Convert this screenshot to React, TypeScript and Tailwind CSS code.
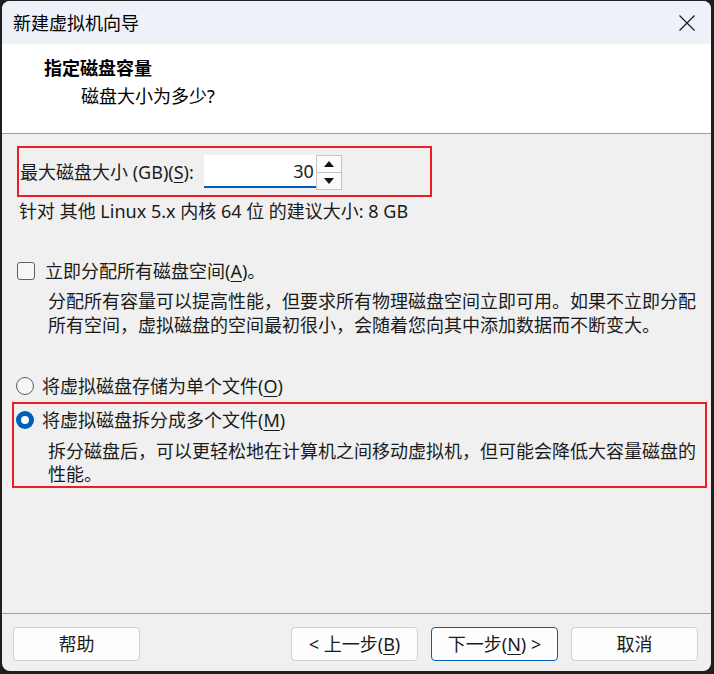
import React from "react";

const FONT = { fontFamily: '"Noto Sans", "Noto Sans CJK SC", sans-serif' };

function U({ children }: { children: React.ReactNode }) {
  return <span className="underline underline-offset-[3px] decoration-1">{children}</span>;
}

function Btn({ children, primary }: { children: React.ReactNode; primary?: boolean }) {
  return (
    <div
      className={
        "w-[127px] h-[34px] rounded-[4px] bg-[#fdfdfd] flex items-center justify-center text-[18px] text-[#1b1b1b] " +
        (primary ? "border border-[#005fb8]" : "border border-[#d1d1d1]")
      }
    >
      {children}
    </div>
  );
}

export default function App() {
  return (
    <div className="w-[714px] h-[674px] bg-[#1f1f1f] flex" style={FONT}>
      <div className="mt-[1px] ml-[2px] mr-[3px] mb-[3px] flex-1 rounded-[8px] overflow-hidden flex flex-col bg-[#f0f0f0] text-[#1b1b1b]">
        {/* Title bar */}
        <div className="h-[43px] bg-[#eef1f8] flex items-center justify-between pl-[11px] pr-[16px]">
          <span className="text-[18px] leading-[24px] text-black">新建虚拟机向导</span>
          <svg width="16" height="16" viewBox="0 0 16 16">
            <path d="M0.5 0.5 L15.5 15.5 M15.5 0.5 L0.5 15.5" stroke="#1b1b1b" strokeWidth="1.2" fill="none" />
          </svg>
        </div>
        {/* Header */}
        <div className="h-[90px] bg-white border-b border-[#a0a0a0] flex flex-col pl-[42px] pt-[12px]">
          <div className="text-[18px] leading-[24px] font-bold text-black">指定磁盘容量</div>
          <div className="text-[18px] leading-[24px] mt-[4px] pl-[37px] text-black">磁盘大小为多少?</div>
        </div>
        {/* Body */}
        <div className="flex-1 flex flex-col text-[18px] leading-[24px]">
          <div className="mt-[12px] ml-[15px] w-[415px] h-[51px] border-2 border-[#ee1c25] flex items-center pl-[1px]">
            <span>
              最大磁盘大小 (GB)(<U>S</U>):
            </span>
            <div className="ml-[10px] w-[112px] h-[33px] bg-white border-b-2 border-[#005fb8] flex items-center justify-end pr-[2px] text-[18px]">
              30
            </div>
            <div className="w-[26px] h-[35px] border border-[#c4c4c4] flex flex-col self-center mt-[2px]">
              <div className="flex-1 border-b border-[#c4c4c4] bg-[#fbfbfb] flex items-center justify-center">
                <svg width="10" height="6" viewBox="0 0 10 6">
                  <path d="M5 0 L10 6 L0 6 Z" fill="#111" />
                </svg>
              </div>
              <div className="flex-1 bg-[#fbfbfb] flex items-center justify-center">
                <svg width="10" height="6" viewBox="0 0 10 6">
                  <path d="M0 0 L10 0 L5 6 Z" fill="#111" />
                </svg>
              </div>
            </div>
          </div>
          <div className="mt-[2px] ml-[17px]">针对 其他 Linux 5.x 内核 64 位 的建议大小: 8 GB</div>

          <div className="mt-[36px] ml-[15px] flex items-center">
            <div className="w-[18px] h-[18px] rounded-[3px] border border-[#5f5f5f] bg-[#f6f6f6]" />
            <span className="ml-[10px]">
              立即分配所有磁盘空间(<U>A</U>)。
            </span>
          </div>
          <div className="mt-[6px] ml-[46px] text-[18px]">
            <div>分配所有容量可以提高性能，但要求所有物理磁盘空间立即可用。如果不立即分配</div>
            <div>所有空间，虚拟磁盘的空间最初很小，会随着您向其中添加数据而不断变大。</div>
          </div>

          <div className="mt-[37px] ml-[14px] flex items-center">
            <div className="w-[18px] h-[18px] rounded-full border border-[#5f5f5f] bg-[#f6f6f6]" />
            <span className="ml-[8px]">
              将虚拟磁盘存储为单个文件(<U>O</U>)
            </span>
          </div>

          <div className="mt-[4px] ml-[10px] w-[695px] h-[86px] border-2 border-[#ee1c25] pt-[4px] pl-[2px]">
            <div className="flex items-center">
              <div className="w-[18px] h-[18px] rounded-full bg-[#005fb8] flex items-center justify-center">
                <div className="w-[8px] h-[8px] rounded-full bg-white" />
              </div>
              <span className="ml-[8px]">
                将虚拟磁盘拆分成多个文件(<U>M</U>)
              </span>
            </div>
            <div className="mt-[8px] ml-[32px] text-[18px] leading-[23px]">
              <div>拆分磁盘后，可以更轻松地在计算机之间移动虚拟机，但可能会降低大容量磁盘的</div>
              <div>性能。</div>
            </div>
          </div>
        </div>
        {/* Footer */}
        <div className="h-[58px] border-t border-[#a0a0a0] flex items-start pt-[13px] pl-[11px] pr-[13px]">
          <Btn>帮助</Btn>
          <div className="flex-1" />
          <div className="flex gap-[13px]">
            <Btn>
              &lt; 上一步(<U>B</U>)
            </Btn>
            <Btn primary>
              下一步(<U>N</U>) &gt;
            </Btn>
            <Btn>取消</Btn>
          </div>
        </div>
      </div>
    </div>
  );
}
